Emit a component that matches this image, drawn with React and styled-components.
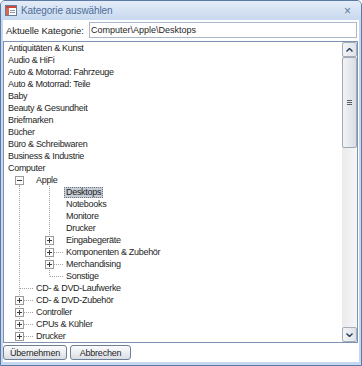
import React from "react"
import styled, { createGlobalStyle, css } from "styled-components"

const GlobalStyle = createGlobalStyle`
  html, body {
    margin: 0;
    padding: 0;
    background: #ffffff;
  }
  body {
    font-family: "Liberation Sans", Arial, sans-serif;
    color: #1e1e1e;
  }
`

const rows = [
  { level: 1, label: "Antiquitäten & Kunst" },
  { level: 1, label: "Audio & HiFi" },
  { level: 1, label: "Auto & Motorrad: Fahrzeuge" },
  { level: 1, label: "Auto & Motorrad: Teile" },
  { level: 1, label: "Baby" },
  { level: 1, label: "Beauty & Gesundheit" },
  { level: 1, label: "Briefmarken" },
  { level: 1, label: "Bücher" },
  { level: 1, label: "Büro & Schreibwaren" },
  { level: 1, label: "Business & Industrie" },
  { level: 1, label: "Computer" },
  { level: 2, label: "Apple", guides: [{ box: "-", down: true }] },
  { level: 3, label: "Desktops", selected: true, guides: [{ line: true }, { line: true }] },
  { level: 3, label: "Notebooks", guides: [{ line: true }, { line: true }] },
  { level: 3, label: "Monitore", guides: [{ line: true }, { line: true }] },
  { level: 3, label: "Drucker", guides: [{ line: true }, { line: true }] },
  { level: 3, label: "Eingabegeräte", guides: [{ line: true }, { line: true, box: "+" }] },
  { level: 3, label: "Komponenten & Zubehör", guides: [{ line: true }, { line: true, branch: true, box: "+" }] },
  { level: 3, label: "Merchandising", guides: [{ line: true }, { line: true, branch: true, box: "+" }] },
  { level: 3, label: "Sonstige", guides: [{ line: true }, { up: true, branch: true }] },
  { level: 2, label: "CD- & DVD-Laufwerke", guides: [{ line: true, branch: true }] },
  { level: 2, label: "CD- & DVD-Zubehör", guides: [{ line: true, branch: true, box: "+" }] },
  { level: 2, label: "Controller", guides: [{ line: true, branch: true, box: "+" }] },
  { level: 2, label: "CPUs & Kühler", guides: [{ line: true, branch: true, box: "+" }] },
  { level: 2, label: "Drucker", guides: [{ line: true, branch: true, box: "+" }] },
]

const TreeGuide = ({ line, up, down, branch, box }) => (
  <GuideCell>
    <svg width="30" height="12" viewBox="0 0 30 12">
      <g stroke="#a3a3a3" strokeWidth="1" strokeDasharray="1 1" fill="none">
        {line && <line x1="15.5" y1="0" x2="15.5" y2="12" />}
        {up && <line x1="15.5" y1="0" x2="15.5" y2="6.5" />}
        {down && <line x1="15.5" y1="7" x2="15.5" y2="12" />}
        {branch && <line x1="16" y1="6.5" x2="30" y2="6.5" />}
      </g>
      {box && (
        <g>
          <rect x="11.5" y="2.5" width="8" height="8" fill="#fbfbfb" stroke="#9a9a9a" />
          <line x1="13" y1="6.5" x2="18" y2="6.5" stroke="#3a3a3a" />
          {box === "+" && <line x1="15.5" y1="4" x2="15.5" y2="9" stroke="#3a3a3a" />}
        </g>
      )}
    </svg>
  </GuideCell>
)

const FormIcon = () => (
  <svg width="12" height="11" viewBox="0 0 12 11">
    <rect x="0.5" y="0.5" width="11" height="10" fill="#ffffff" stroke="#6b7c99" />
    <rect x="1" y="1" width="10" height="2" fill="#c9493a" />
    <rect x="1" y="3" width="3" height="7" fill="#d9664f" />
    <line x1="5" y1="5.5" x2="10" y2="5.5" stroke="#8a97ad" />
    <line x1="5" y1="7.5" x2="10" y2="7.5" stroke="#8a97ad" />
  </svg>
)

const App = () => {
  return (
    <>
      <GlobalStyle />
      <Window>
        <TitleBar>
          <FormIcon />
          <Title>Kategorie auswählen</Title>
          <CloseButton>×</CloseButton>
        </TitleBar>
        <Content>
          <CurrentRow>
            <FieldLabel>Aktuelle Kategorie:</FieldLabel>
            <TextBox>Computer\Apple\Desktops</TextBox>
          </CurrentRow>
          <ListBox>
            <TreeBody>
              {rows.map((row, i) => (
                <TreeRow key={i} $level={row.level}>
                  {(row.guides || []).map((g, j) => (
                    <TreeGuide key={j} {...g} />
                  ))}
                  <NodeLabel $selected={row.selected}>{row.label}</NodeLabel>
                </TreeRow>
              ))}
            </TreeBody>
            <ScrollBar>
              <ScrollArrow>
                <svg width="7" height="4" viewBox="0 0 7 4">
                  <path d="M0.5 3.5 L3.5 0.5 L6.5 3.5" stroke="#2b3a4f" strokeWidth="1.4" fill="none" />
                </svg>
              </ScrollArrow>
              <ScrollTrack>
                <ScrollThumb>
                  <Grip />
                </ScrollThumb>
              </ScrollTrack>
              <ScrollArrow>
                <svg width="7" height="4" viewBox="0 0 7 4">
                  <path d="M0.5 0.5 L3.5 3.5 L6.5 0.5" stroke="#2b3a4f" strokeWidth="1.4" fill="none" />
                </svg>
              </ScrollArrow>
            </ScrollBar>
          </ListBox>
          <ButtonRow>
            <DialogButton $w={64}>Übernehmen</DialogButton>
            <DialogButton $w={61}>Abbrechen</DialogButton>
          </ButtonRow>
        </Content>
      </Window>
    </>
  )
}

export default App

const Window = styled.div`
  width: 362px;
  height: 366px;
  box-sizing: border-box;
  display: flex;
  flex-direction: column;
  background: #c6d8ef;
  border: 1px solid #5b7aa5;
  border-radius: 5px 5px 0 0;
  overflow: hidden;
`

const TitleBar = styled.div`
  height: 19px;
  flex: none;
  display: flex;
  align-items: center;
  padding: 0 6px 0 4px;
  background: linear-gradient(to bottom, #e4edf8 0%, #d6e3f4 45%, #c8d9ef 100%);
`

const Title = styled.span`
  margin-left: 4px;
  font-size: 10px;
  letter-spacing: -0.1px;
  color: #4f6d97;
  flex: 1;
`

const CloseButton = styled.span`
  font-size: 12px;
  line-height: 12px;
  color: #60789a;
  margin-right: 4px;
`

const Content = styled.div`
  flex: 1;
  margin: 0 2px 4px 2px;
  padding: 2px 1px 2px 0;
  background: #ffffff;
  display: flex;
  flex-direction: column;
`

const CurrentRow = styled.div`
  display: flex;
  align-items: center;
  height: 16px;
  margin-bottom: 3px;
`

const FieldLabel = styled.span`
  width: 86px;
  padding-left: 3px;
  box-sizing: border-box;
  font-size: 9.5px;
  letter-spacing: -0.1px;
  white-space: nowrap;
  flex: none;
`

const TextBox = styled.div`
  flex: 1;
  height: 16px;
  box-sizing: border-box;
  margin-right: 1px;
  border: 1px solid #a9b7c9;
  padding: 0 1px;
  font-size: 9px;
  line-height: 14px;
`

const ListBox = styled.div`
  height: 302px;
  box-sizing: border-box;
  border: 1px solid #7d93b1;
  display: flex;
  flex: none;
`

const TreeBody = styled.div`
  flex: 1;
  overflow: hidden;
`

const TreeRow = styled.div`
  display: flex;
  align-items: center;
  height: 12px;
  ${p => p.$level === 1 && css`padding-left: 2px;`}
`

const GuideCell = styled.span`
  display: block;
  width: 30px;
  height: 12px;
  flex: none;
  svg {
    display: block;
  }
`

const NodeLabel = styled.span`
  font-size: 9px;
  letter-spacing: -0.3px;
  line-height: 9px;
  padding: 0 1px;
  white-space: nowrap;
  box-sizing: border-box;
  border: 1px dotted transparent;
  ${p =>
    p.$selected &&
    css`
      background: #c7ccd5;
      border-color: #6d7382;
    `}
`

const ScrollBar = styled.div`
  width: 15px;
  flex: none;
  display: flex;
  flex-direction: column;
  background: linear-gradient(to right, #eaeaec, #f6f6f7);
`

const ScrollArrow = styled.div`
  height: 15px;
  flex: none;
  box-sizing: border-box;
  border: 1px solid #a4adb9;
  border-radius: 2px;
  background: linear-gradient(to right, #f3f4f6, #dfe3ea);
  display: flex;
  align-items: center;
  justify-content: center;
`

const ScrollTrack = styled.div`
  flex: 1;
`

const ScrollThumb = styled.div`
  height: 91px;
  box-sizing: border-box;
  border: 1px solid #a0a8b3;
  border-radius: 2px;
  background: linear-gradient(to right, #f2f3f5, #dadee5);
  display: flex;
  align-items: center;
  justify-content: center;
`

const Grip = styled.div`
  width: 5px;
  height: 5px;
  background: repeating-linear-gradient(to bottom, #59616d 0, #59616d 1px, transparent 1px, transparent 2px);
`

const ButtonRow = styled.div`
  display: flex;
  gap: 3px;
  margin-top: 2px;
`

const DialogButton = styled.button`
  width: ${p => p.$w}px;
  height: 15px;
  padding: 0;
  box-sizing: border-box;
  border: 1px solid #6f7f98;
  border-radius: 3px;
  background: linear-gradient(to bottom, #fbfbfb 0%, #eceef2 50%, #dadde3 100%);
  font-family: "Liberation Sans", Arial, sans-serif;
  font-size: 9px;
  letter-spacing: -0.2px;
  line-height: 12px;
  color: #1e1e1e;
`
